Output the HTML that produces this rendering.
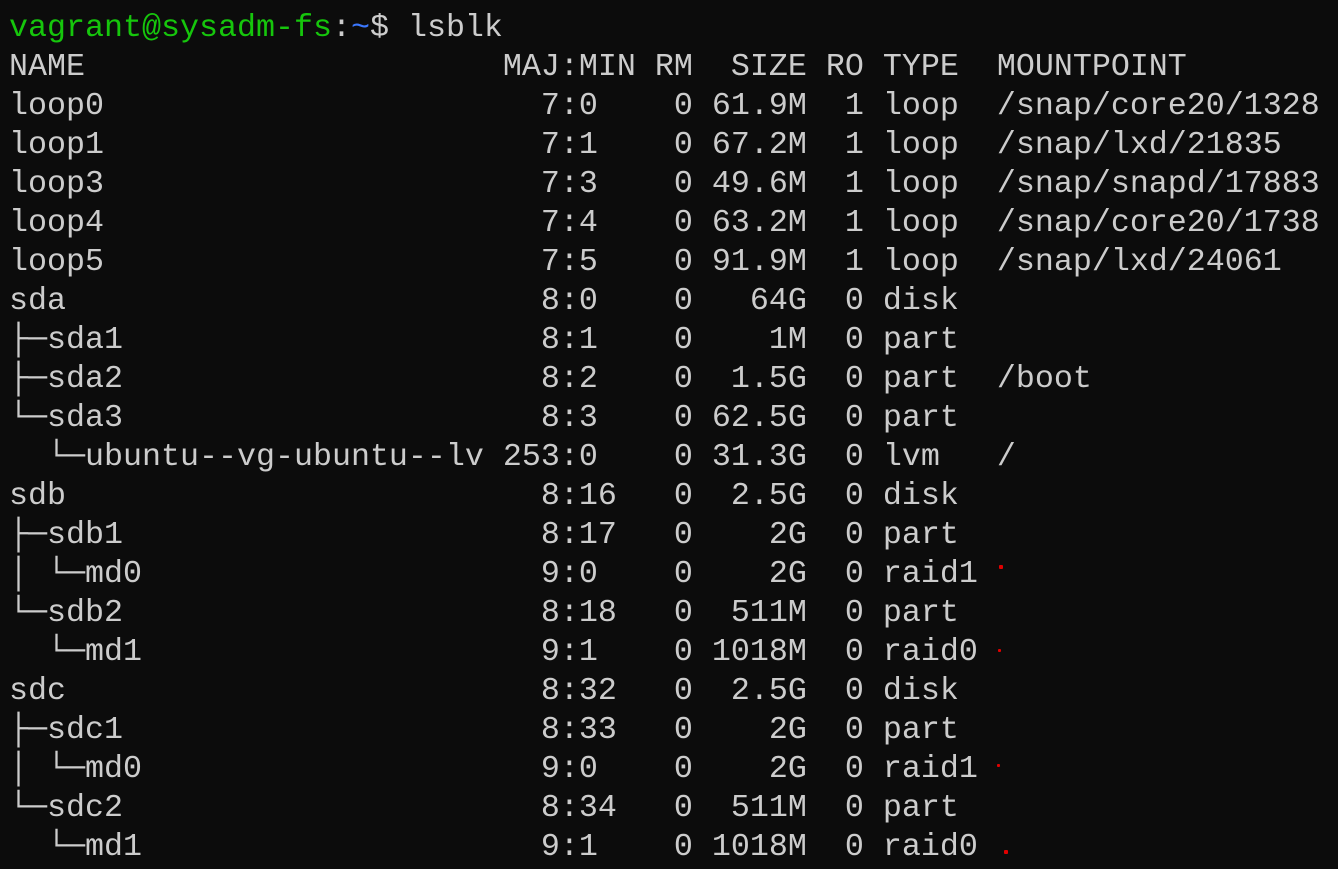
<!DOCTYPE html>
<html><head><meta charset="utf-8"><style>
html,body{margin:0;padding:0;background:#0c0c0c;width:1338px;height:869px;overflow:hidden}
pre{position:absolute;left:9px;top:-30px;margin:0;font-family:"Liberation Mono","DejaVu Sans Mono",monospace;font-size:31.67px;line-height:39px;color:#cccccc;letter-spacing:0}
.g{color:#16c60c}.b{color:#3b78ff}
.d{position:absolute;width:4px;height:4px;background:#e00000;border-radius:1px}
</style></head><body>
<pre>

<span class="g">vagrant@sysadm-fs</span>:<span class="b">~</span>$ lsblk
NAME                      MAJ:MIN RM  SIZE RO TYPE  MOUNTPOINT
loop0                       7:0    0 61.9M  1 loop  /snap/core20/1328
loop1                       7:1    0 67.2M  1 loop  /snap/lxd/21835
loop3                       7:3    0 49.6M  1 loop  /snap/snapd/17883
loop4                       7:4    0 63.2M  1 loop  /snap/core20/1738
loop5                       7:5    0 91.9M  1 loop  /snap/lxd/24061
sda                         8:0    0   64G  0 disk
├─sda1                      8:1    0    1M  0 part
├─sda2                      8:2    0  1.5G  0 part  /boot
└─sda3                      8:3    0 62.5G  0 part
  └─ubuntu--vg-ubuntu--lv 253:0    0 31.3G  0 lvm   /
sdb                         8:16   0  2.5G  0 disk
├─sdb1                      8:17   0    2G  0 part
│ └─md0                     9:0    0    2G  0 raid1
└─sdb2                      8:18   0  511M  0 part
  └─md1                     9:1    0 1018M  0 raid0
sdc                         8:32   0  2.5G  0 disk
├─sdc1                      8:33   0    2G  0 part
│ └─md0                     9:0    0    2G  0 raid1
└─sdc2                      8:34   0  511M  0 part
  └─md1                     9:1    0 1018M  0 raid0
</pre>
<div class="d" style="left:999px;top:565px"></div>
<div class="d" style="left:998px;top:649px;width:3px;height:3px"></div>
<div class="d" style="left:997px;top:764px;width:3px;height:3px"></div>
<div class="d" style="left:1004px;top:850px"></div>
</body></html>
